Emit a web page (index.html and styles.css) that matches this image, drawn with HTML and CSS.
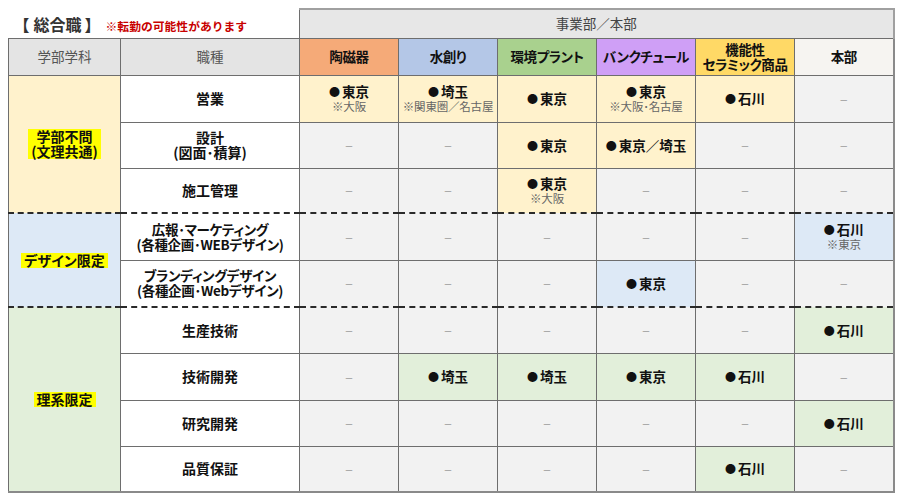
FILE: index.html
```html
<!DOCTYPE html>
<html lang="ja">
<head>
<meta charset="utf-8">
<title>総合職</title>
<link rel="stylesheet" href="styles.css">
</head>
<body>
<table class="grid">
  <colgroup>
    <col class="c-dept"><col class="c-job">
    <col class="c-div"><col class="c-div"><col class="c-div"><col class="c-div"><col class="c-div"><col class="c-div">
  </colgroup>
  <tr class="r-top">
    <td colspan="2" class="title-cell"><span class="title">【<span class="tt">総合職</span>】</span><span class="note">※転勤の可能性があります</span></td>
    <td colspan="6" class="super-head">事業部／本部</td>
  </tr>
  <tr class="r-head">
    <td class="head-plain">学部学科</td>
    <td class="head-plain">職種</td>
    <td class="head h-orange">陶磁器</td>
    <td class="head h-blue">水創り</td>
    <td class="head h-green">環境プラント</td>
    <td class="head h-purple">バンクチュール</td>
    <td class="head h-yellow">機能性<br>セラミック商品</td>
    <td class="head h-main last">本部</td>
  </tr>

  <tr class="r1">
    <td rowspan="3" class="grp g-yellow"><span class="mark">学部不問<br>(文理共通)</span></td>
    <td class="job">営業</td>
    <td class="cell on-y"><b><span class="dot">●</span>東京</b><small>※大阪</small></td>
    <td class="cell on-y"><b><span class="dot">●</span>埼玉</b><small>※関東圏／名古屋</small></td>
    <td class="cell on-y"><b><span class="dot">●</span>東京</b></td>
    <td class="cell on-y"><b><span class="dot">●</span>東京</b><small>※大阪･名古屋</small></td>
    <td class="cell on-y"><b><span class="dot">●</span>石川</b></td>
    <td class="cell last"><i>－</i></td>
  </tr>
  <tr class="r2">
    <td class="job">設計<br>(図面･積算)</td>
    <td class="cell"><i>－</i></td>
    <td class="cell"><i>－</i></td>
    <td class="cell on-y"><b><span class="dot">●</span>東京</b></td>
    <td class="cell on-y"><b><span class="dot">●</span>東京／埼玉</b></td>
    <td class="cell"><i>－</i></td>
    <td class="cell last"><i>－</i></td>
  </tr>
  <tr class="r3">
    <td class="job">施工管理</td>
    <td class="cell"><i>－</i></td>
    <td class="cell"><i>－</i></td>
    <td class="cell on-y"><b><span class="dot">●</span>東京</b><small>※大阪</small></td>
    <td class="cell"><i>－</i></td>
    <td class="cell"><i>－</i></td>
    <td class="cell last"><i>－</i></td>
  </tr>

  <tr class="r4 grp-start">
    <td rowspan="2" class="grp g-blue"><span class="mark">デザイン限定</span></td>
    <td class="job kana">広報･マーケティング<br>(各種企画･WEBデザイン)</td>
    <td class="cell"><i>－</i></td>
    <td class="cell"><i>－</i></td>
    <td class="cell"><i>－</i></td>
    <td class="cell"><i>－</i></td>
    <td class="cell"><i>－</i></td>
    <td class="cell on-b last"><b><span class="dot">●</span>石川</b><small>※東京</small></td>
  </tr>
  <tr class="r5">
    <td class="job kana">ブランディングデザイン<br>(各種企画･Webデザイン)</td>
    <td class="cell"><i>－</i></td>
    <td class="cell"><i>－</i></td>
    <td class="cell"><i>－</i></td>
    <td class="cell on-b"><b><span class="dot">●</span>東京</b></td>
    <td class="cell"><i>－</i></td>
    <td class="cell last"><i>－</i></td>
  </tr>

  <tr class="r6 grp-start">
    <td rowspan="4" class="grp g-green end"><span class="mark">理系限定</span></td>
    <td class="job">生産技術</td>
    <td class="cell"><i>－</i></td>
    <td class="cell"><i>－</i></td>
    <td class="cell"><i>－</i></td>
    <td class="cell"><i>－</i></td>
    <td class="cell"><i>－</i></td>
    <td class="cell on-g last"><b><span class="dot">●</span>石川</b></td>
  </tr>
  <tr class="r7">
    <td class="job">技術開発</td>
    <td class="cell"><i>－</i></td>
    <td class="cell on-g"><b><span class="dot">●</span>埼玉</b></td>
    <td class="cell on-g"><b><span class="dot">●</span>埼玉</b></td>
    <td class="cell on-g"><b><span class="dot">●</span>東京</b></td>
    <td class="cell on-g"><b><span class="dot">●</span>石川</b></td>
    <td class="cell last"><i>－</i></td>
  </tr>
  <tr class="r8">
    <td class="job">研究開発</td>
    <td class="cell"><i>－</i></td>
    <td class="cell"><i>－</i></td>
    <td class="cell"><i>－</i></td>
    <td class="cell"><i>－</i></td>
    <td class="cell"><i>－</i></td>
    <td class="cell on-g last"><b><span class="dot">●</span>石川</b></td>
  </tr>
  <tr class="r9 end-row">
    <td class="job">品質保証</td>
    <td class="cell"><i>－</i></td>
    <td class="cell"><i>－</i></td>
    <td class="cell"><i>－</i></td>
    <td class="cell"><i>－</i></td>
    <td class="cell on-g"><b><span class="dot">●</span>石川</b></td>
    <td class="cell last"><i>－</i></td>
  </tr>
</table>
</body>
</html>
```

FILE: styles.css
```css
html, body {
  margin: 0;
  padding: 0;
  background: #ffffff;
}
body {
  padding: 8px;
  font-family: "Noto Sans CJK JP", "Noto Sans", sans-serif;
  color: #111;
}
.grid {
  border-collapse: collapse;
  table-layout: fixed;
  width: 885px;
}
.c-dept { width: 112px; }
.c-job { width: 179px; }
.c-div { width: 99px; }

.grid td {
  border: 1px solid #6e6e6e;
  padding: 0 2px;
  text-align: center;
  vertical-align: middle;
  line-height: 15px;
}

/* top title row */
.r-top { height: 29px; }
.grid td.title-cell {
  border: none;
  text-align: left;
  padding-left: 5px;
  padding-top: 4px;
  white-space: nowrap;
  vertical-align: middle;
}
.title {
  font-weight: 700;
  font-size: 16px;
  color: #333;
  margin-right: 5px;
}
.tt { margin: 0 3px 0 4px; }
.note {
  font-weight: 700;
  font-size: 11.8px;
  color: #c80000;
}
.grid td.super-head {
  background: #e7e7e7;
  color: #444;
  font-size: 13.5px;
  border-top: 2px solid #a0a0a0;
  border-right: 2px solid #a0a0a0;
}

/* header row */
.r-head { height: 37px; }
.head-plain {
  background: #e4e4e4;
  color: #555;
  font-size: 13.5px;
}
.head {
  font-weight: 700;
  font-size: 13.5px;
  color: #111;
  line-height: 15px;
  font-feature-settings: "palt";
  letter-spacing: -0.4px;
}
.h-orange { background: #f5aa78; }
.h-blue { background: #b4c7e7; }
.h-green { background: #a9d18e; }
.h-purple { background: #cf9ff6; }
.h-yellow { background: #ffd966; }
.h-main { background: #f6f4f1; }
.grid td.last { border-right: 2px solid #8a8a8a; }

/* body rows */
.r1 { height: 47px; }
.r2 { height: 46px; }
.r3 { height: 45px; }
.r4 { height: 47px; }
.r5 { height: 47px; }
.r6 { height: 46px; }
.r7 { height: 47px; }
.r8 { height: 46px; }
.r9 { height: 46px; }

.grp-start > td { border-top: 2px dashed #2a2a2a; }
.end-row > td, .grid td.end { border-bottom: 2px solid #8a8a8a; }

.grp {
  font-weight: 700;
  font-size: 14px;
  line-height: 17px;
  font-feature-settings: "palt";
}
.g-yellow { background: #fff2cc; }
.g-blue { background: #dde9f6; }
.g-green { background: #e2efda; }
.mark {
  display: inline-block;
  background: #ffff00;
  padding: 0 3px;
}

.job {
  background: #ffffff;
  font-weight: 700;
  font-size: 14px;
  line-height: 16px;
  color: #111;
  font-feature-settings: "palt";
}
.job.kana {
  font-size: 13.5px;
  letter-spacing: -0.3px;
}

.cell {
  background: #f2f2f2;
}
.cell b {
  display: block;
  font-weight: 700;
  font-size: 13.5px;
  line-height: 15px;
  color: #111;
  white-space: nowrap;
}
.dot {
  font-size: 11px;
  margin-right: 2px;
  vertical-align: 1px;
}
.cell small {
  display: block;
  font-size: 11.5px;
  line-height: 14px;
  color: #666;
  white-space: nowrap;
  letter-spacing: -0.2px;
}
.cell i {
  font-style: normal;
  font-size: 9px;
  color: #8a8a8a;
}
.on-y { background: #fff2cc; }
.on-b { background: #dde9f6; }
.on-g { background: #e2efda; }
```
